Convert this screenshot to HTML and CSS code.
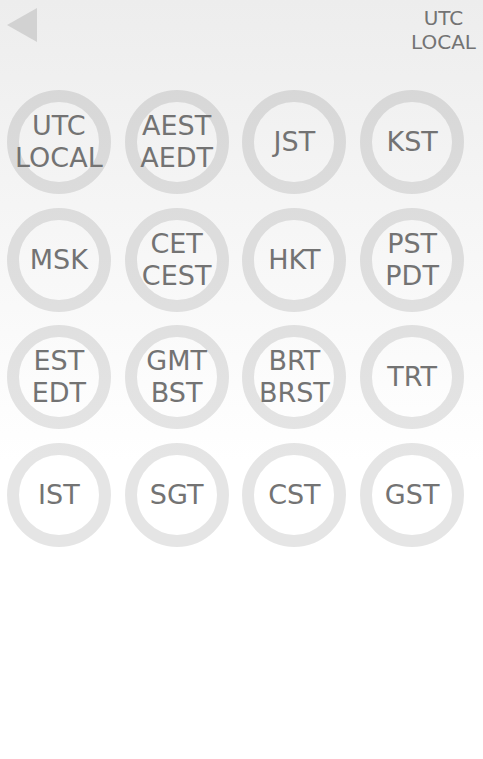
FILE: index.html
```html
<!DOCTYPE html>
<html lang="en">
<head>
  <meta charset="UTF-8">
  <title>Time Zones</title>
  <link rel="stylesheet" href="styles.css">
</head>
<body>

  <div class="header">
    <a class="back" href="#"></a>
    <div class="current">UTC<br>LOCAL</div>
  </div>

  <div class="zones">
    <div class="zone"><span class="ring">UTC<br>LOCAL</span></div>
    <div class="zone"><span class="ring">AEST<br>AEDT</span></div>
    <div class="zone"><span class="ring">JST</span></div>
    <div class="zone"><span class="ring">KST</span></div>

    <div class="zone"><span class="ring">MSK</span></div>
    <div class="zone"><span class="ring">CET<br>CEST</span></div>
    <div class="zone"><span class="ring">HKT</span></div>
    <div class="zone"><span class="ring">PST<br>PDT</span></div>

    <div class="zone"><span class="ring">EST<br>EDT</span></div>
    <div class="zone"><span class="ring">GMT<br>BST</span></div>
    <div class="zone"><span class="ring">BRT<br>BRST</span></div>
    <div class="zone"><span class="ring">TRT</span></div>

    <div class="zone"><span class="ring">IST</span></div>
    <div class="zone"><span class="ring">SGT</span></div>
    <div class="zone"><span class="ring">CST</span></div>
    <div class="zone"><span class="ring">GST</span></div>
  </div>

</body>
</html>
```

FILE: styles.css
```css
html {
  background: #fff;
}

body {
  margin: 0;
  min-height: 759px;
  background: linear-gradient(#ededed 0, #ffffff 460px);
  color: #737373;
  font-family: "DejaVu Sans", Verdana, sans-serif;
}

.header {
  height: 83px;
  display: flex;
  justify-content: space-between;
  align-items: flex-start;
}

.back {
  display: block;
  width: 0;
  height: 0;
  margin: 8px 0 0 7px;
  border-top: 17px solid transparent;
  border-bottom: 17px solid transparent;
  border-right: 30px solid #d2d2d2;
}

.current {
  margin: 6px 7px 0 0;
  font-size: 20px;
  line-height: 24px;
  text-align: center;
}

.zones {
  width: 471px;
  display: grid;
  grid-template-columns: repeat(4, 1fr);
}

.zone {
  aspect-ratio: 1;
  display: flex;
  align-items: center;
  justify-content: center;
}

.ring {
  box-sizing: border-box;
  width: 104px;
  height: 104px;
  border: 12px solid rgba(0, 0, 0, 0.1);
  border-radius: 50%;
  display: flex;
  align-items: center;
  justify-content: center;
  font-size: 27px;
  line-height: 32px;
  text-align: center;
  white-space: nowrap;
}
```
